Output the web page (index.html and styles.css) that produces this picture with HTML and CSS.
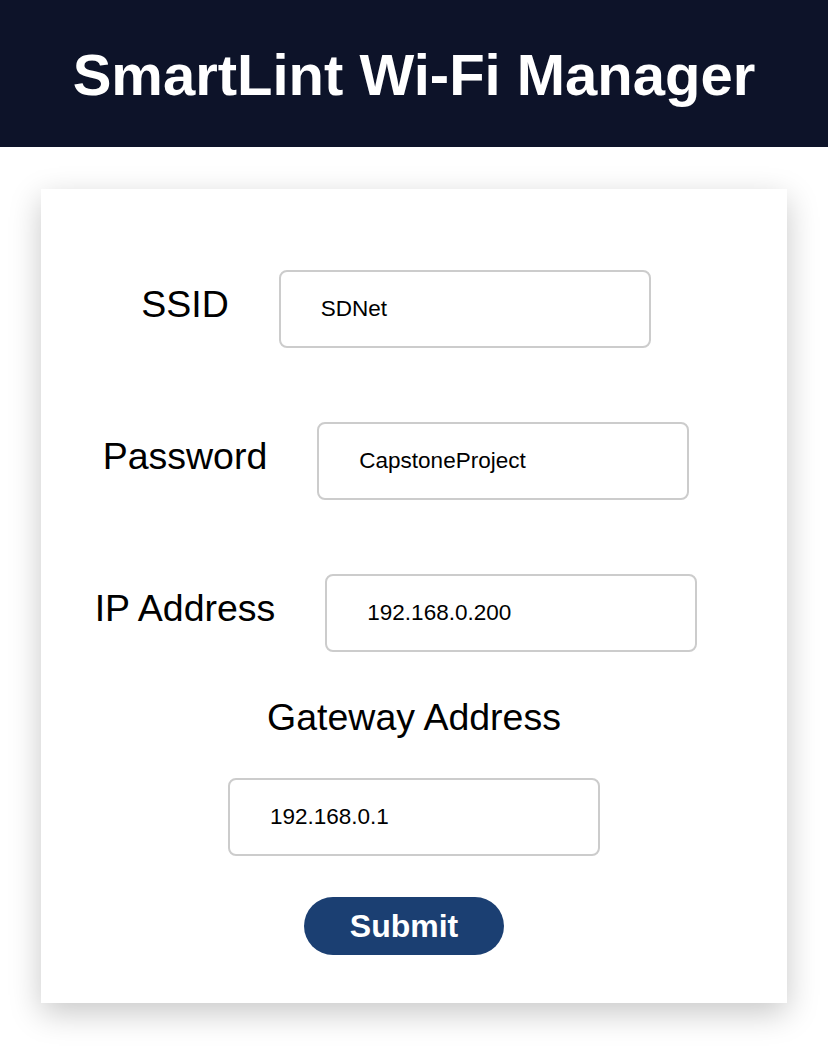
FILE: index.html
```html
<!DOCTYPE html>
<html lang="en">
<head>
<meta charset="utf-8">
<title>SmartLint Wi-Fi Manager</title>
<link rel="stylesheet" href="styles.css">
</head>
<body>
<header class="topbar">
  <h1 class="title">SmartLint Wi-Fi Manager</h1>
</header>
<main class="card">
  <form class="form" action="#" method="post">
    <div class="row">
      <label class="label" for="ssid">SSID</label>
      <input class="field" type="text" id="ssid" name="ssid" value="SDNet">
    </div>
    <div class="row">
      <label class="label" for="pass">Password</label>
      <input class="field" type="text" id="pass" name="pass" value="CapstoneProject">
    </div>
    <div class="row">
      <label class="label" for="ip">IP Address</label>
      <input class="field" type="text" id="ip" name="ip" value="192.168.0.200">
    </div>
    <div class="row row-stacked">
      <label class="label" for="gateway">Gateway Address</label>
      <input class="field" type="text" id="gateway" name="gateway" value="192.168.0.1">
    </div>
    <div class="actions">
      <button class="submit" type="submit">Submit</button>
    </div>
  </form>
</main>
</body>
</html>
```

FILE: styles.css
```css
html, body {
  margin: 0;
  padding: 0;
  background: #ffffff;
}

body {
  font-family: "Liberation Sans", Arial, Helvetica, sans-serif;
  color: #000000;
  padding-bottom: 51px;
}

.topbar {
  height: 147px;
  background: #0d1329;
  display: flex;
  align-items: center;
  justify-content: center;
}

.title {
  margin: 0;
  color: #ffffff;
  font-size: 58px;
  font-weight: 700;
  line-height: 1;
  padding-top: 2px;
}

.card {
  width: 746px;
  margin: 42px 0 0 41px;
  background: #ffffff;
  box-shadow: 0 10px 30px rgba(0, 0, 0, 0.22);
  box-sizing: border-box;
  padding: 81px 0 48px;
}

.form {
  display: flex;
  flex-direction: column;
}

.row {
  display: flex;
  align-items: center;
  justify-content: center;
  gap: 50px;
  padding-right: 36px;
  margin-bottom: 74px;
}

.row .label {
  margin-bottom: 10px;
}

.row:nth-child(3) {
  margin-bottom: 44px;
}

.row-stacked {
  flex-direction: column;
  gap: 39px;
  padding-right: 0;
  margin-bottom: 41px;
}

.row-stacked .label {
  margin-bottom: 0;
}

.label {
  font-size: 37.5px;
  line-height: normal;
  color: #000000;
}

.field {
  width: 372px;
  height: 78px;
  box-sizing: border-box;
  border: 2px solid #cccccc;
  border-radius: 8px;
  padding: 0 16px 0 40px;
  font-family: "Liberation Sans", Arial, Helvetica, sans-serif;
  font-size: 22.5px;
  color: #000000;
  background: #ffffff;
  outline: none;
}

.actions {
  display: flex;
  justify-content: center;
}

.submit {
  width: 200px;
  height: 58px;
  margin-right: 20px;
  border: none;
  border-radius: 29px;
  background: #1b3f72;
  color: #ffffff;
  font-family: "Liberation Sans", Arial, Helvetica, sans-serif;
  font-size: 32px;
  font-weight: 700;
  padding: 0;
  cursor: pointer;
}
```
